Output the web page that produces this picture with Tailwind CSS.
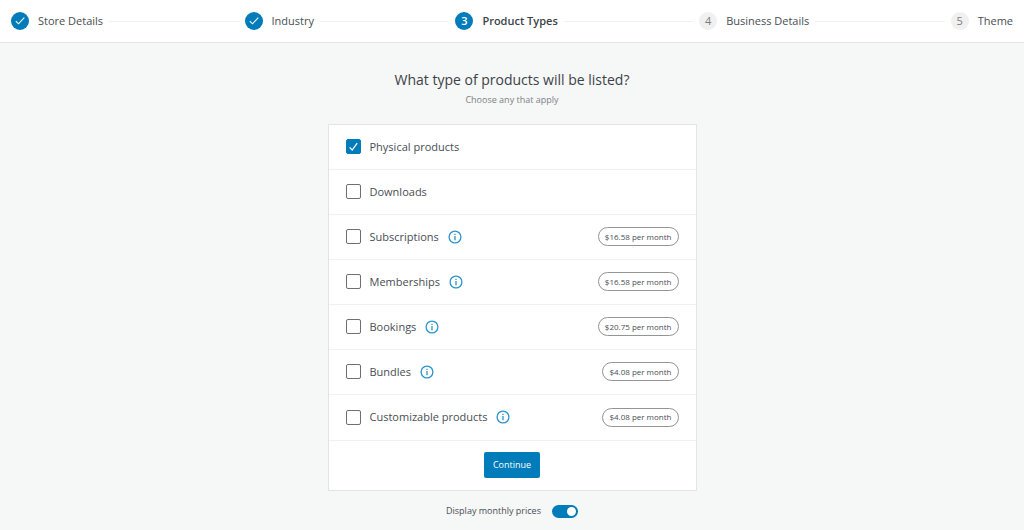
<!DOCTYPE html>
<html lang="en">
<head>
<meta charset="utf-8">
<meta name="viewport" content="width=device-width, initial-scale=1">
<title>Product Types</title>
<script src="https://cdn.jsdelivr.net/npm/@tailwindcss/browser@4"></script>
</head>
<body class="min-h-screen bg-[#f6f7f7] font-['Open_Sans','Noto_Sans',sans-serif] text-[#484e54]">
<header class="border-b border-[#e2e4e7] bg-white">
  <ol class="flex h-[42px] items-center gap-1.5 px-[11px] text-[11px] leading-4 whitespace-nowrap">
    <li class="flex items-center gap-[9px]">
      <span class="flex size-[18px] items-center justify-center rounded-full bg-[#007cba]"><svg class="size-3" viewBox="0 0 12 12" fill="none" stroke="#fff" stroke-width="1.1" aria-hidden="true"><path d="M1.8 6.2 4.5 8.8 10.3 2.6"/></svg></span>
      <span>Store Details</span>
    </li>
    <li class="h-px flex-1 bg-[#f0f0f1]" aria-hidden="true"></li>
    <li class="flex items-center gap-[9px]">
      <span class="flex size-[18px] items-center justify-center rounded-full bg-[#007cba]"><svg class="size-3" viewBox="0 0 12 12" fill="none" stroke="#fff" stroke-width="1.1" aria-hidden="true"><path d="M1.8 6.2 4.5 8.8 10.3 2.6"/></svg></span>
      <span>Industry</span>
    </li>
    <li class="h-px flex-1 bg-[#f0f0f1]" aria-hidden="true"></li>
    <li class="flex items-center gap-[9px]" aria-current="step">
      <span class="flex size-[18px] items-center justify-center rounded-full bg-[#007cba] font-semibold text-white">3</span>
      <span class="font-semibold text-[#3c4248]">Product Types</span>
    </li>
    <li class="h-px flex-1 bg-[#f0f0f1]" aria-hidden="true"></li>
    <li class="flex items-center gap-[9px]">
      <span class="flex size-[18px] items-center justify-center rounded-full bg-[#f0f0f0] text-[#7c7c7c]">4</span>
      <span>Business Details</span>
    </li>
    <li class="h-px flex-1 bg-[#f0f0f1]" aria-hidden="true"></li>
    <li class="flex items-center gap-[9px]">
      <span class="flex size-[18px] items-center justify-center rounded-full bg-[#f0f0f0] text-[#7c7c7c]">5</span>
      <span>Theme</span>
    </li>
  </ol>
</header>

<main class="mx-auto flex max-w-[369px] flex-col items-center pt-[27px]">
  <h1 class="text-[14px] leading-5 text-[#3c4248]">What type of products will be listed?</h1>
  <p class="mt-1 text-[9px] leading-3 text-[#7c8186]">Choose any that apply</p>

  <form class="mt-[18px] w-full border border-[#e2e4e7] bg-white text-[11px] leading-4">
    <ul>
      <li class="flex h-[45px] items-center border-b border-[#f0f1f2] px-[17px] pb-px">
        <span class="relative flex"><input id="physical" type="checkbox" checked class="size-[15px] appearance-none rounded-xs border border-[#6c7075] bg-white checked:border-[#007cba] checked:bg-[#007cba]"><svg class="pointer-events-none absolute inset-0 size-[15px]" viewBox="0 0 15 15" fill="none" stroke="#fff" stroke-width="1.2" aria-hidden="true"><path d="M3.6 8.4 6.2 11 11.2 4.2"/></svg></span>
        <label for="physical" class="ml-[9px]">Physical products</label>
      </li>
      <li class="flex h-[45px] items-center border-b border-[#f0f1f2] px-[17px] pb-px">
        <input id="downloads" type="checkbox" class="size-[15px] appearance-none rounded-xs border border-[#6c7075] bg-white">
        <label for="downloads" class="ml-[9px]">Downloads</label>
      </li>
      <li class="flex h-[45px] items-center border-b border-[#f0f1f2] px-[17px] pb-px">
        <input id="subscriptions" type="checkbox" class="size-[15px] appearance-none rounded-xs border border-[#6c7075] bg-white">
        <label for="subscriptions" class="ml-[9px]">Subscriptions</label>
        <button type="button" aria-label="About Subscriptions" class="ml-[9px]"><svg class="block size-[14px]" viewBox="0 0 14 14" fill="none" stroke="#2b93c8" stroke-width="1.3" aria-hidden="true"><circle cx="7" cy="7" r="5.9"/><path d="M7 6v4.2M7 3.7V5"/></svg></button>
        <span class="ml-auto flex h-[19px] items-center rounded-full border border-[#949494] px-1.5 text-[8px]">$16.58 per month</span>
      </li>
      <li class="flex h-[45px] items-center border-b border-[#f0f1f2] px-[17px] pb-px">
        <input id="memberships" type="checkbox" class="size-[15px] appearance-none rounded-xs border border-[#6c7075] bg-white">
        <label for="memberships" class="ml-[9px]">Memberships</label>
        <button type="button" aria-label="About Memberships" class="ml-[9px]"><svg class="block size-[14px]" viewBox="0 0 14 14" fill="none" stroke="#2b93c8" stroke-width="1.3" aria-hidden="true"><circle cx="7" cy="7" r="5.9"/><path d="M7 6v4.2M7 3.7V5"/></svg></button>
        <span class="ml-auto flex h-[19px] items-center rounded-full border border-[#949494] px-1.5 text-[8px]">$16.58 per month</span>
      </li>
      <li class="flex h-[45px] items-center border-b border-[#f0f1f2] px-[17px] pb-px">
        <input id="bookings" type="checkbox" class="size-[15px] appearance-none rounded-xs border border-[#6c7075] bg-white">
        <label for="bookings" class="ml-[9px]">Bookings</label>
        <button type="button" aria-label="About Bookings" class="ml-[9px]"><svg class="block size-[14px]" viewBox="0 0 14 14" fill="none" stroke="#2b93c8" stroke-width="1.3" aria-hidden="true"><circle cx="7" cy="7" r="5.9"/><path d="M7 6v4.2M7 3.7V5"/></svg></button>
        <span class="ml-auto flex h-[19px] items-center rounded-full border border-[#949494] px-1.5 text-[8px]">$20.75 per month</span>
      </li>
      <li class="flex h-[45px] items-center border-b border-[#f0f1f2] px-[17px] pb-px">
        <input id="bundles" type="checkbox" class="size-[15px] appearance-none rounded-xs border border-[#6c7075] bg-white">
        <label for="bundles" class="ml-[9px]">Bundles</label>
        <button type="button" aria-label="About Bundles" class="ml-[9px]"><svg class="block size-[14px]" viewBox="0 0 14 14" fill="none" stroke="#2b93c8" stroke-width="1.3" aria-hidden="true"><circle cx="7" cy="7" r="5.9"/><path d="M7 6v4.2M7 3.7V5"/></svg></button>
        <span class="ml-auto flex h-[19px] items-center rounded-full border border-[#949494] px-1.5 text-[8px]">$4.08 per month</span>
      </li>
      <li class="flex h-[46px] items-center border-b border-[#f0f1f2] px-[17px] pb-px">
        <input id="customizable" type="checkbox" class="size-[15px] appearance-none rounded-xs border border-[#6c7075] bg-white">
        <label for="customizable" class="ml-[9px]">Customizable products</label>
        <button type="button" aria-label="About Customizable products" class="ml-[9px]"><svg class="block size-[14px]" viewBox="0 0 14 14" fill="none" stroke="#2b93c8" stroke-width="1.3" aria-hidden="true"><circle cx="7" cy="7" r="5.9"/><path d="M7 6v4.2M7 3.7V5"/></svg></button>
        <span class="ml-auto flex h-[19px] items-center rounded-full border border-[#949494] px-1.5 text-[8px]">$4.08 per month</span>
      </li>
    </ul>
    <div class="flex justify-center pt-[11px] pb-3">
      <button type="submit" class="h-[26px] rounded-xs bg-[#007cba] px-[9px] text-[9px] text-white">Continue</button>
    </div>
  </form>

  <div class="mt-3 flex items-center gap-[11px] text-[9px] leading-4">
    <label for="monthly">Display monthly prices</label>
    <input id="monthly" type="checkbox" role="switch" checked class="flex h-[13px] w-[26px] appearance-none items-center rounded-full bg-[#007cba] px-0.5 before:ml-auto before:size-[9px] before:rounded-full before:bg-white before:content-['']">
  </div>
</main>
</body>
</html>
